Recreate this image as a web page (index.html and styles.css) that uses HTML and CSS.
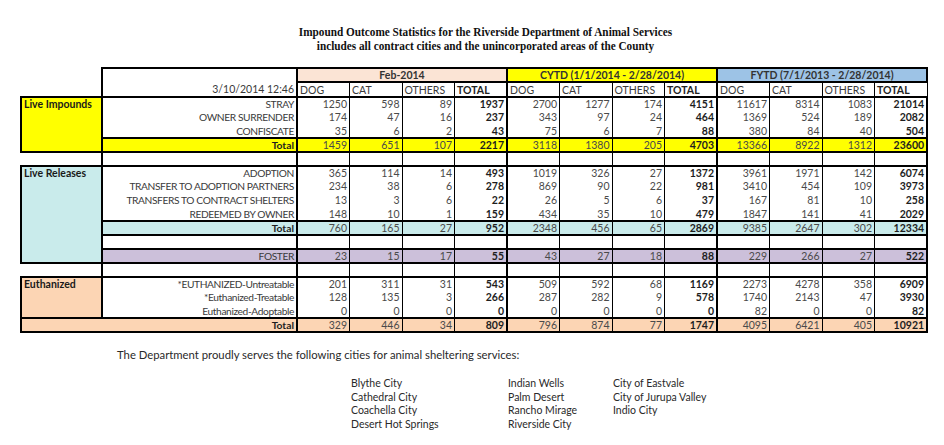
FILE: index.html
```html
<!DOCTYPE html>
<html lang="en">
<head>
<meta charset="utf-8">
<title>Impound Outcome Statistics</title>
<link rel="stylesheet" href="styles.css">
</head>
<body>
<div class="page">
  <header class="title">
    <div class="title-line">Impound Outcome Statistics for the Riverside Department of Animal Services</div>
    <div class="title-line">includes all contract cities and the unincorporated areas of the County</div>
  </header>

  <table class="stats">
    <colgroup>
      <col class="c-cat"><col class="c-label">
      <col class="c-num"><col class="c-num"><col class="c-num"><col class="c-num">
      <col class="c-num"><col class="c-num"><col class="c-num"><col class="c-num">
      <col class="c-num"><col class="c-num"><col class="c-num"><col class="c-num">
    </colgroup>
    <tbody>
      <tr class="r-h1">
        <td class="none"></td>
        <td class="stamp" rowspan="2">3/10/2014 12:46</td>
        <td class="period feb" colspan="4">Feb-2014</td>
        <td class="period cytd" colspan="4">CYTD (1/1/2014 - 2/28/2014)</td>
        <td class="period fytd" colspan="4">FYTD (7/1/2013 - 2/28/2014)</td>
      </tr>
      <tr class="r-h2">
        <td class="none"></td>
        <td class="hd gs">DOG</td><td class="hd">CAT</td><td class="hd">OTHERS</td><td class="hd tot">TOTAL</td>
        <td class="hd gs">DOG</td><td class="hd">CAT</td><td class="hd">OTHERS</td><td class="hd tot">TOTAL</td>
        <td class="hd gs">DOG</td><td class="hd">CAT</td><td class="hd">OTHERS</td><td class="hd tot">TOTAL</td>
      </tr>

      <tr class="r sec-top">
        <td class="cat impound" rowspan="4">Live Impounds</td>
        <td class="lbl">STRAY</td>
        <td class="n gs">1250</td><td class="n">598</td><td class="n">89</td><td class="n tot">1937</td>
        <td class="n gs">2700</td><td class="n">1277</td><td class="n">174</td><td class="n tot">4151</td>
        <td class="n gs">11617</td><td class="n">8314</td><td class="n">1083</td><td class="n tot">21014</td>
      </tr>
      <tr class="r">
        <td class="lbl">OWNER SURRENDER</td>
        <td class="n gs">174</td><td class="n">47</td><td class="n">16</td><td class="n tot">237</td>
        <td class="n gs">343</td><td class="n">97</td><td class="n">24</td><td class="n tot">464</td>
        <td class="n gs">1369</td><td class="n">524</td><td class="n">189</td><td class="n tot">2082</td>
      </tr>
      <tr class="r">
        <td class="lbl">CONFISCATE</td>
        <td class="n gs">35</td><td class="n">6</td><td class="n">2</td><td class="n tot">43</td>
        <td class="n gs">75</td><td class="n">6</td><td class="n">7</td><td class="n tot">88</td>
        <td class="n gs">380</td><td class="n">84</td><td class="n">40</td><td class="n tot">504</td>
      </tr>
      <tr class="r total yellow">
        <td class="lbl">Total</td>
        <td class="n gs">1459</td><td class="n">651</td><td class="n">107</td><td class="n tot">2217</td>
        <td class="n gs">3118</td><td class="n">1380</td><td class="n">205</td><td class="n tot">4703</td>
        <td class="n gs">13366</td><td class="n">8922</td><td class="n">1312</td><td class="n tot">23600</td>
      </tr>

      <tr class="r blank">
        <td class="none"></td><td class="lbl"></td>
        <td class="n gs"></td><td class="n"></td><td class="n"></td><td class="n"></td>
        <td class="n gs"></td><td class="n"></td><td class="n"></td><td class="n"></td>
        <td class="n gs"></td><td class="n"></td><td class="n"></td><td class="n"></td>
      </tr>

      <tr class="r sec-top">
        <td class="cat release" rowspan="7">Live Releases</td>
        <td class="lbl">ADOPTION</td>
        <td class="n gs">365</td><td class="n">114</td><td class="n">14</td><td class="n tot">493</td>
        <td class="n gs">1019</td><td class="n">326</td><td class="n">27</td><td class="n tot">1372</td>
        <td class="n gs">3961</td><td class="n">1971</td><td class="n">142</td><td class="n tot">6074</td>
      </tr>
      <tr class="r">
        <td class="lbl">TRANSFER TO ADOPTION PARTNERS</td>
        <td class="n gs">234</td><td class="n">38</td><td class="n">6</td><td class="n tot">278</td>
        <td class="n gs">869</td><td class="n">90</td><td class="n">22</td><td class="n tot">981</td>
        <td class="n gs">3410</td><td class="n">454</td><td class="n">109</td><td class="n tot">3973</td>
      </tr>
      <tr class="r">
        <td class="lbl">TRANSFERS TO CONTRACT SHELTERS</td>
        <td class="n gs">13</td><td class="n">3</td><td class="n">6</td><td class="n tot">22</td>
        <td class="n gs">26</td><td class="n">5</td><td class="n">6</td><td class="n tot">37</td>
        <td class="n gs">167</td><td class="n">81</td><td class="n">10</td><td class="n tot">258</td>
      </tr>
      <tr class="r">
        <td class="lbl">REDEEMED BY OWNER</td>
        <td class="n gs">148</td><td class="n">10</td><td class="n">1</td><td class="n tot">159</td>
        <td class="n gs">434</td><td class="n">35</td><td class="n">10</td><td class="n tot">479</td>
        <td class="n gs">1847</td><td class="n">141</td><td class="n">41</td><td class="n tot">2029</td>
      </tr>
      <tr class="r total teal">
        <td class="lbl">Total</td>
        <td class="n gs">760</td><td class="n">165</td><td class="n">27</td><td class="n tot">952</td>
        <td class="n gs">2348</td><td class="n">456</td><td class="n">65</td><td class="n tot">2869</td>
        <td class="n gs">9385</td><td class="n">2647</td><td class="n">302</td><td class="n tot">12334</td>
      </tr>
      <tr class="r blank">
        <td class="lbl"></td>
        <td class="n gs"></td><td class="n"></td><td class="n"></td><td class="n"></td>
        <td class="n gs"></td><td class="n"></td><td class="n"></td><td class="n"></td>
        <td class="n gs"></td><td class="n"></td><td class="n"></td><td class="n"></td>
      </tr>
      <tr class="r total lavender">
        <td class="lbl plain">FOSTER</td>
        <td class="n gs">23</td><td class="n">15</td><td class="n">17</td><td class="n tot">55</td>
        <td class="n gs">43</td><td class="n">27</td><td class="n">18</td><td class="n tot">88</td>
        <td class="n gs">229</td><td class="n">266</td><td class="n">27</td><td class="n tot">522</td>
      </tr>

      <tr class="r blank">
        <td class="none"></td><td class="lbl"></td>
        <td class="n gs"></td><td class="n"></td><td class="n"></td><td class="n"></td>
        <td class="n gs"></td><td class="n"></td><td class="n"></td><td class="n"></td>
        <td class="n gs"></td><td class="n"></td><td class="n"></td><td class="n"></td>
      </tr>

      <tr class="r sec-top">
        <td class="cat euth" rowspan="3">Euthanized</td>
        <td class="lbl">*EUTHANIZED-Untreatable</td>
        <td class="n gs">201</td><td class="n">311</td><td class="n">31</td><td class="n tot">543</td>
        <td class="n gs">509</td><td class="n">592</td><td class="n">68</td><td class="n tot">1169</td>
        <td class="n gs">2273</td><td class="n">4278</td><td class="n">358</td><td class="n tot">6909</td>
      </tr>
      <tr class="r">
        <td class="lbl">*Euthanized-Treatable</td>
        <td class="n gs">128</td><td class="n">135</td><td class="n">3</td><td class="n tot">266</td>
        <td class="n gs">287</td><td class="n">282</td><td class="n">9</td><td class="n tot">578</td>
        <td class="n gs">1740</td><td class="n">2143</td><td class="n">47</td><td class="n tot">3930</td>
      </tr>
      <tr class="r">
        <td class="lbl">Euthanized-Adoptable</td>
        <td class="n gs">0</td><td class="n">0</td><td class="n">0</td><td class="n tot">0</td>
        <td class="n gs">0</td><td class="n">0</td><td class="n">0</td><td class="n tot">0</td>
        <td class="n gs">82</td><td class="n">0</td><td class="n">0</td><td class="n tot">82</td>
      </tr>
      <tr class="r total peach">
        <td class="lbl wide" colspan="2">Total</td>
        <td class="n gs">329</td><td class="n">446</td><td class="n">34</td><td class="n tot">809</td>
        <td class="n gs">796</td><td class="n">874</td><td class="n">77</td><td class="n tot">1747</td>
        <td class="n gs">4095</td><td class="n">6421</td><td class="n">405</td><td class="n tot">10921</td>
      </tr>
    </tbody>
  </table>

  <p class="serves">The Department proudly serves the following cities for animal sheltering services:</p>

  <div class="cities">
    <ul class="city-col">
      <li>Blythe City</li>
      <li>Cathedral City</li>
      <li>Coachella City</li>
      <li>Desert Hot Springs</li>
    </ul>
    <ul class="city-col">
      <li>Indian Wells</li>
      <li>Palm Desert</li>
      <li>Rancho Mirage</li>
      <li>Riverside City</li>
    </ul>
    <ul class="city-col">
      <li>City of Eastvale</li>
      <li>City of Jurupa Valley</li>
      <li>Indio City</li>
    </ul>
  </div>
</div>
</body>
</html>
```

FILE: styles.css
```css
* { box-sizing: border-box; }

html, body {
  margin: 0;
  padding: 0;
  background: #ffffff;
}

.page {
  width: 944px;
  height: 445px;
  padding-top: 26px;
  font-family: Lato, "Open Sans", sans-serif;
  color: #3a3a3a;
}

/* ---------- title ---------- */
.title {
  display: flex;
  flex-direction: column;
  align-items: center;
  margin-left: 27px;
  font-family: "Liberation Serif", "Times New Roman", serif;
  font-weight: bold;
  font-size: 12.5px;
  line-height: 13.5px;
  color: #111;
  transform: scaleX(0.9);
  transform-origin: 458px 0;
}

/* ---------- table ---------- */
.stats {
  margin: 14px 0 0 20px;
  border-collapse: collapse;
  table-layout: fixed;
  width: 906px;
  font-size: 10.5px;
  line-height: 12px;
}

.c-cat { width: 81px; }
.c-label { width: 195px; }
.c-num { width: 52.5px; }

.stats td {
  padding: 0 2px;
  white-space: nowrap;
  overflow: hidden;
  border-left: 1px solid #000;
  border-right: 1px solid #000;
  vertical-align: middle;
}

.stats td.none {
  border: none;
}

.r-h1 td { height: 13px; }
.r-h2 td { height: 15px; }
.r td { height: 14px; }
.r.sec-top td { height: 13px; }

.stamp {
  text-align: right;
  vertical-align: bottom !important;
  border: 2px solid #000 !important;
  padding-bottom: 1px !important;
  color: #3a3a3a;
}

.period {
  text-align: center;
  font-weight: bold;
  color: #333;
  border: 2px solid #000 !important;
}
.feb { background: #fbe4d5; }
.cytd { background: #ffff00; }
.fytd { background: #9dc3e6; }

.hd {
  text-align: left;
  border-top: 1px solid #000;
  color: #3a3a3a;
}
.hd.tot { font-weight: bold; color: #222; }

.gs { border-left: 2px solid #000 !important; }

.lbl {
  text-align: right;
  border-left: 2px solid #000 !important;
  border-right: 2px solid #000 !important;
  color: #3a3a3a;
  font-size: 10.2px;
  letter-spacing: -0.38px;
}

.n {
  text-align: right;
  color: #4a4a4a;
}
.n.tot {
  font-weight: bold;
  color: #1e1e1e;
}
.stats td.n:last-child { border-right: 2px solid #000; }

.sec-top td { border-top: 2px solid #000; }

.total td {
  border-top: 2px solid #000;
  border-bottom: 2px solid #000;
}
.total .lbl {
  font-weight: bold;
  color: #1e1e1e;
  font-size: 10.3px;
  letter-spacing: 0;
}
.total .lbl.plain {
  font-weight: normal;
  color: #3a3a3a;
  font-size: 10.2px;
  letter-spacing: -0.38px;
}

.yellow td { background: #ffff00; }
.teal td { background: #c9ebeb; }
.lavender td { background: #ccc0da; }
.peach td { background: #fcd5b4; }

.stats td.cat {
  vertical-align: top;
  text-align: left;
  font-weight: bold;
  color: #1a1a1a;
  border: 2px solid #000;
  padding-left: 2px;
}
.impound { background: #ffff00; }
.release { background: #c9ebeb; }
.euth { background: #fcd5b4; }

.stats td.wide {
  border-left: 2px solid #000 !important;
}

/* ---------- footer ---------- */
.serves {
  margin: 15px 0 0 117px;
  font-size: 11.3px;
  line-height: 13px;
  color: #2a2a2a;
}

.cities {
  display: grid;
  grid-template-columns: 157px 105px auto;
  margin: 16px 0 0 351px;
  font-size: 10.5px;
  line-height: 13.7px;
  color: #2a2a2a;
}

.city-col {
  list-style: none;
  margin: 0;
  padding: 0;
}
```
